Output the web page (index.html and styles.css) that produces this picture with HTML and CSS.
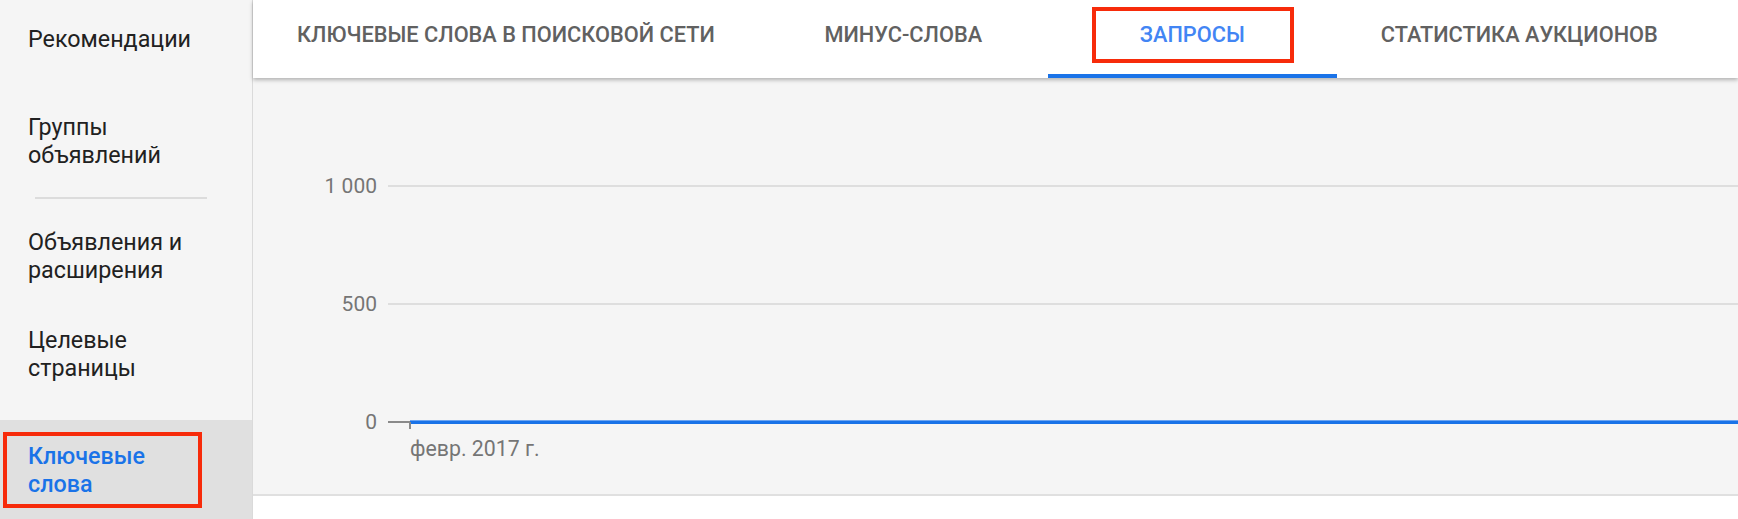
FILE: index.html
```html
<!DOCTYPE html>
<html lang="ru">
<head>
<meta charset="utf-8">
<title>Запросы</title>
<link rel="stylesheet" href="styles.css">
</head>
<body>
<div class="app">
  <nav class="sidebar">
    <a class="nav-item">Рекомендации</a>
    <a class="nav-item groups">Группы объявлений</a>
    <hr class="nav-divider">
    <a class="nav-item">Объявления и расширения</a>
    <a class="nav-item">Целевые страницы</a>
    <a class="nav-item active">Ключевые слова</a>
  </nav>
  <main class="main">
    <header class="tabs">
      <div class="tab">КЛЮЧЕВЫЕ СЛОВА В ПОИСКОВОЙ СЕТИ</div>
      <div class="tab">МИНУС-СЛОВА</div>
      <div class="tab active">ЗАПРОСЫ</div>
      <div class="tab">СТАТИСТИКА АУКЦИОНОВ</div>
    </header>
    <section class="chart">
      <div class="grid-row"><span class="y-label">1 000</span><span class="grid-line"></span></div>
      <div class="grid-row"><span class="y-label">500</span><span class="grid-line"></span></div>
      <div class="grid-row"><span class="y-label">0</span><span class="axis-stub"></span><span class="series-line"></span></div>
      <div class="x-label">февр. 2017 г.</div>
    </section>
    <div class="footer"></div>
  </main>
  <div class="annot annot-nav"></div>
  <div class="annot annot-tab"></div>
</div>
</body>
</html>
```
FILE: styles.css
```css
* { box-sizing: border-box; }
body {
  margin: 0;
  font-family: Roboto, "Noto Sans", sans-serif;
  background: #fff;
}
.app {
  position: relative;
  display: grid;
  grid-template-columns: 253px 1fr;
  width: 1738px;
  height: 519px;
  overflow: hidden;
}
.sidebar {
  display: flex;
  flex-direction: column;
  padding-top: 4px;
  background: #f5f5f5;
  border-right: 1px solid #dadada;
}
.nav-item {
  display: block;
  padding: 21px 50px 21px 28px;
  font-size: 23.3px;
  line-height: 28px;
  color: #212121;
}
.nav-item.groups { margin-top: 18px; }
.nav-divider {
  margin: 7px 0 8px 35px;
  width: 172px;
  height: 2px;
  border: 0;
  background: #dcdcdc;
}
.nav-item.active {
  flex: 1;
  margin-top: 17px;
  padding-top: 22px;
  background: #e0e0e0;
  color: #1a73e8;
  font-weight: 500;
}
.main {
  display: flex;
  flex-direction: column;
  min-width: 0;
}
.tabs {
  position: relative;
  z-index: 1;
  display: flex;
  height: 78px;
  flex: 0 0 78px;
  background: #fff;
  box-shadow: 0 2px 4px rgba(0, 0, 0, 0.28);
}
.tab {
  min-width: 289px;
  padding: 23px 44px 0;
  font-size: 21.75px;
  line-height: 24px;
  font-weight: 500;
  color: #616161;
  text-align: center;
  white-space: nowrap;
}
.tab.active {
  color: #4285f4;
  border-bottom: 4px solid #1a73e8;
}
.chart {
  flex: 0 0 418px;
  padding-top: 96px;
  background: #f5f5f5;
  border-bottom: 2px solid #e0e0e0;
}
.grid-row {
  display: flex;
  align-items: center;
  height: 24px;
}
.grid-row + .grid-row { margin-top: 94px; }
.y-label {
  width: 124px;
  text-align: right;
  font-size: 21px;
  line-height: 24px;
  color: #757575;
}
.grid-line {
  flex: 1;
  height: 2px;
  margin-left: 11px;
  background: #dedede;
}
.axis-stub {
  width: 22px;
  height: 2px;
  margin-left: 11px;
  background: #8a8a8a;
}
.series-line {
  position: relative;
  flex: 1;
  height: 4px;
  background: #1a73e8;
  border-top: 1px solid #6ea6f2;
}
.series-line::before {
  content: "";
  position: absolute;
  left: -1px;
  top: 1px;
  width: 2px;
  height: 7px;
  background: #8a8a8a;
}
.x-label {
  margin: 3px 0 0 157px;
  font-size: 21.3px;
  line-height: 24px;
  color: #757575;
}
.footer {
  flex: 1;
  background: #fff;
}
.annot {
  position: absolute;
  z-index: 2;
  border: 4px solid #f72b0a;
}
.annot-nav {
  left: 3px;
  top: 432px;
  width: 199px;
  height: 76px;
}
.annot-tab {
  left: 1092px;
  top: 7px;
  width: 202px;
  height: 56px;
}
```
